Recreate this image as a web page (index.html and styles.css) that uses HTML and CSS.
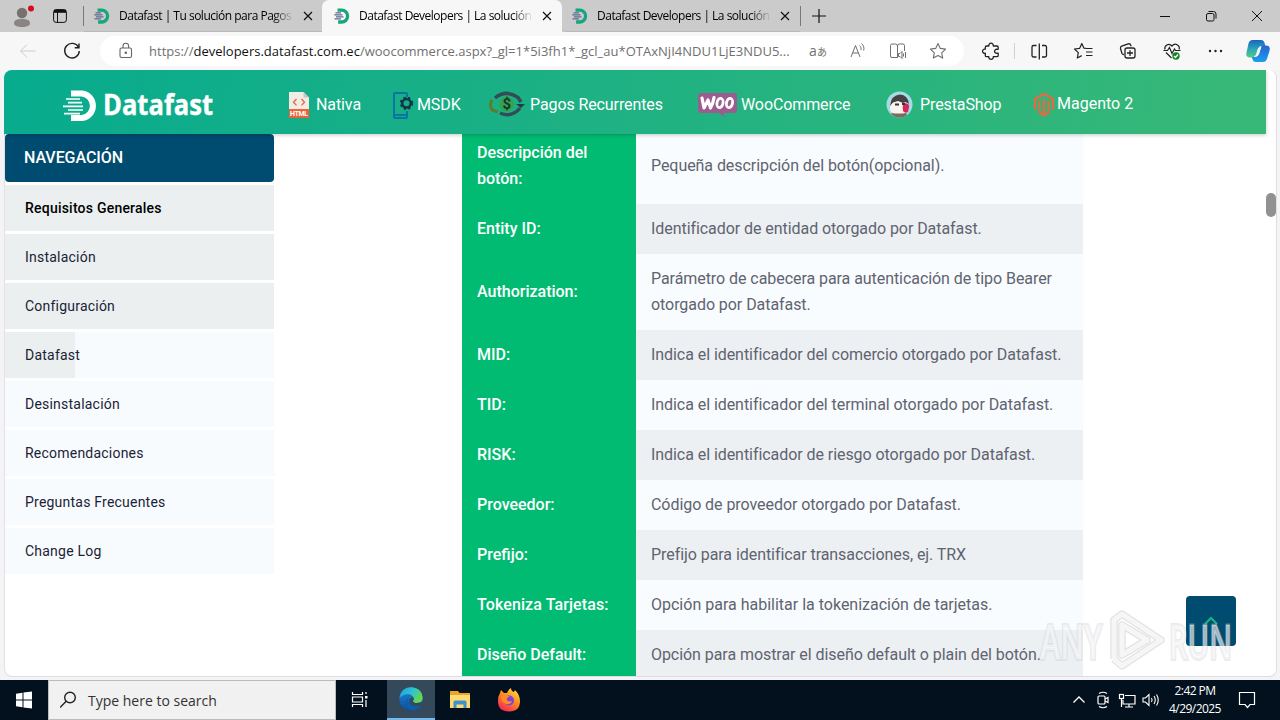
FILE: index.html
```html
<!DOCTYPE html>
<html lang="es">
<head>
<meta charset="utf-8">
<title>Datafast Developers</title>
<link rel="stylesheet" href="styles.css">
</head>
<body>
<svg width="0" height="0" class="defs">
  <defs>
    <linearGradient id="cp1" x1="0" y1="0" x2="0" y2="1"><stop offset="0" stop-color="#1a62c4"/><stop offset=".5" stop-color="#2aa5b8"/><stop offset="1" stop-color="#54cd83"/></linearGradient>
    <linearGradient id="cp2" x1="0" y1="0" x2="0" y2="1"><stop offset="0" stop-color="#2763cf"/><stop offset="1" stop-color="#1ba0ee"/></linearGradient>
    <linearGradient id="edge1" x1="0" y1="0" x2="1" y2=".5"><stop offset="0" stop-color="#1b9de2"/><stop offset=".55" stop-color="#2fc2cf"/><stop offset="1" stop-color="#66d64f"/></linearGradient>
    <linearGradient id="edge2" x1="0" y1="0" x2="0" y2="1"><stop offset="0" stop-color="#2187d5"/><stop offset="1" stop-color="#0a4f9f"/></linearGradient>
    <linearGradient id="fox" x1=".8" y1="0" x2=".2" y2="1"><stop offset="0" stop-color="#ffe03d"/><stop offset=".45" stop-color="#ff8a1f"/><stop offset="1" stop-color="#f4215c"/></linearGradient>
    <symbol id="favicon" viewBox="0 0 16 16">
      <path d="M4 2.200H8.200a5.900 5.900 0 0 1 0 11.800H4.600" fill="none" stroke="#16a57c" stroke-width="3.300"/>
      <path d="M2 4.800H7.500M0.800 6.800H9M2.500 8.800H10M1 10.800H7.500" stroke="#5d6a91" stroke-width="1.200"/>
    </symbol>
    <symbol id="x" viewBox="0 0 10 10"><path d="M1 1l8 8M9 1l-8 8" stroke="#111" stroke-width="1.2" fill="none"/></symbol>
  </defs>
</svg>

<div class="tabstrip">
  <svg class="avatar" width="24" height="24" viewBox="0 0 24 24"><circle cx="12" cy="9" r="5.200" fill="#777270"/><path d="M4 19.500c0-3.500 3-4.500 8-4.500s8 1 8 4.500c0 2-3.500 3.500-8 3.500s-8-1.500-8-3.500z" fill="#8a8583"/><circle cx="21" cy="4.500" r="3" fill="#d50b1d"/></svg>
  <svg class="spaces" width="14" height="14" viewBox="0 0 14 14" fill="none" stroke="#111"><rect x=".6" y=".6" width="12.800" height="12.800" rx="2.500"/><path d="M1 2.300h12" stroke-width="3"/><path d="M4.500 3v10"/></svg>
  <span class="tab-sep"></span>
  <div class="tab"><svg width="17" height="16"><use href="#favicon"/></svg><span class="tab-title">Datafast | Tu solución para Pagos</span><svg width="10" height="10"><use href="#x"/></svg></div>
  <div class="tab active"><svg width="17" height="16"><use href="#favicon"/></svg><span class="tab-title">Datafast Developers | La solución</span><svg width="10" height="10"><use href="#x"/></svg></div>
  <div class="tab last"><svg width="17" height="16"><use href="#favicon"/></svg><span class="tab-title">Datafast Developers | La solución</span><svg width="10" height="10"><use href="#x"/></svg></div>
  <span class="tab-sep"></span>
  <svg class="plus" width="14" height="14" viewBox="0 0 14 14"><path d="M7 0v14M0 7h14" stroke="#111" stroke-width="1.200"/></svg>
  <div class="win-buttons">
    <svg width="46" height="32" viewBox="0 0 46 32" fill="none" stroke="#111"><path d="M18 16.500h10"/></svg>
    <svg width="46" height="32" viewBox="0 0 46 32" fill="none" stroke="#111"><rect x="18.500" y="13.500" width="7.500" height="7.500" rx="1.500"/><path d="M20.500 11.500h5a2.500 2.500 0 0 1 2.500 2.500v4.500"/></svg>
    <svg width="46" height="32" viewBox="0 0 46 32" fill="none" stroke="#111"><path d="M18 11l10 10M28 11l-10 10"/></svg>
  </div>
</div>

<div class="toolbar">
  <svg class="slot" width="44" height="38" viewBox="0 0 44 38" fill="none" stroke="#ccc"><path d="M29.500 19H15M21 12.500l-6.500 6.500 6.500 6.500"/></svg>
  <svg class="slot" width="44" height="38" viewBox="0 0 44 38" fill="none" stroke="#222" stroke-width="1.400"><path d="M28.500 15.300a7.300 7.300 0 1 0 .8 3.700M29 11.500v4.300h-4.300"/></svg>
  <div class="address">
    <svg width="14" height="18" viewBox="0 0 14 18" fill="none" stroke="#666" stroke-width="1.100"><rect x="1" y="6" width="11.500" height="9.500" rx="1.500"/><path d="M4 6V4a2.800 2.800 0 0 1 5.600 0v2"/><circle cx="6.800" cy="10.700" r=".7" fill="#666"/></svg>
    <span class="url">https://<b>developers.datafast.com.ec</b>/woocommerce.aspx?_gl=1*5i3fh1*_gcl_au*OTAxNjI4NDU1LjE3NDU5...</span>
    <span class="translate">a<small>あ</small></span>
    <svg width="40" height="30" viewBox="0 0 40 30" fill="none" stroke="#707070"><path d="M13 21l4.500-11.500L22 21M14.600 17h6M21.500 9.500c1.500 1.300 1.800 3 1.500 4.500M23.500 7.500c2.300 2 2.800 4.500 2.200 7"/></svg>
    <svg width="40" height="30" viewBox="0 0 40 30" fill="none" stroke="#707070"><path d="M20 21.500h-6a1.500 1.500 0 0 1-1.500-1.500V9.500A1.500 1.500 0 0 1 14 8h3.500a2 2 0 0 1 2 2v11.500M19.500 10a2 2 0 0 1 2-2H25a1.500 1.500 0 0 1 1.500 1.500V15"/><path d="M20.500 17.500h1.500l2-2v7l-2-2h-1.500zM25.500 17.500v3M27.500 16v6"/></svg>
    <svg width="40" height="30" viewBox="0 0 40 30" fill="none" stroke="#707070" stroke-width="1.100" stroke-linejoin="round"><path d="M20 7.500l2.300 4.900 5.300.7-3.900 3.700 1 5.300-4.700-2.600-4.700 2.600 1-5.300-3.900-3.700 5.300-.7z"/></svg>
  </div>
  <svg class="ext" width="48" height="38" viewBox="0 0 48 38" fill="none" stroke="#222" stroke-width="1.300" stroke-linejoin="round"><path d="M20.500 14h2.300a2.300 2.300 0 1 1 4.500 0h3.700q1.200 0 1.200 1.200v2.100h-1.200a2 2 0 1 0 0 3.900h1.200v2.200q0 1.200-1.200 1.200h-3.700a2.300 2.300 0 1 1-4.500 0h-2.300q-1.200 0-1.200-1.200v-2.200a2.100 2.100 0 1 1 0-4v-2q0-1.200 1.200-1.200z"/></svg>
  <span class="tool-sep"></span>
  <svg width="44" height="38" viewBox="0 0 44 38" fill="none" stroke="#222" stroke-width="1.300"><path d="M19.500 13.500h-3a1.500 1.500 0 0 0-1.500 1.500v8.500a1.500 1.500 0 0 0 1.500 1.500h3M25 13.500h3a1.500 1.500 0 0 1 1.500 1.500v8.500a1.500 1.500 0 0 1-1.500 1.500h-3M22.300 11.500v16"/></svg>
  <svg width="44" height="38" viewBox="0 0 44 38" fill="none" stroke="#222" stroke-width="1.200" stroke-linejoin="round"><path d="M26 16.500l-3.200-.4-2-4.600-2.100 4.800-5.200.7 3.800 3.600-1 5.400 4.400-2.400M24 16.500h7.500M25 20h6.500M25 23.500h6.500"/></svg>
  <svg width="44" height="38" viewBox="0 0 44 38" fill="none" stroke="#222" stroke-width="1.300"><rect x="20" y="16" width="10" height="10" rx="2"/><path d="M25 18.200v5.800M22 21h6M19 22.500a2 2 0 0 1-2-1l-1.500-5a2 2 0 0 1 1.200-2.300l6.500-2.300a2 2 0 0 1 2.500 1.200l.5 1.200"/></svg>
  <svg width="44" height="38" viewBox="0 0 44 38" fill="none" stroke="#222" stroke-width="1.200"><path d="M16 17.500c-1-3.500 3.500-7.500 7-3.500 3.500-4 8.500 0 7 3.500M17 20.500l5.500 5.500M14.500 18.500h4l2-3 2.500 6 2.500-4.500 1 1.500h5"/><circle cx="27" cy="24" r="3.700" fill="#118325" stroke="none"/><path d="M25 24l1.500 1.500 2.500-3" stroke="#fff"/></svg>
  <svg width="44" height="38" viewBox="0 0 44 38" fill="#222"><circle cx="17" cy="19" r="1.200"/><circle cx="22.500" cy="19" r="1.200"/><circle cx="28" cy="19" r="1.200"/></svg>
  <svg class="copilot" width="40" height="38" viewBox="0 0 40 38"><path d="M15.500 8h8.500q3 0 3.700 3.500l.7 2.500h-3q-2.500 0-3.300 3l-1.800 5.500q-1 3-4 3h-3q-5 0-3.800-5l2-9q1-3.500 4-3.500z" fill="url(#cp1)"/><path d="M26 30h-7q-3 0-3.700-3.500l-.6-1.500h2.500q2.500 0 3.300-3l1.800-5.500q1-3 4-3h2.500q5 0 3.800 5l-2.500 8q-1 3.500-4.100 3.500z" fill="url(#cp2)"/><path d="M17.500 24.500q1.500-.5 2-2l1.700-5.500q.7-2 2.800-2.500l-2.500 8q-.7 2-4 2z" fill="#f0f8fc" stroke="#f0f8fc"/></svg>
</div>

<div class="viewport">
  <header class="site-header">
    <svg class="logo-mark" width="34" height="32" viewBox="0 0 34 32" fill="none" stroke="#fff"><path d="M8 3.500h11a12 12.300 0 0 1 0 24.500H8" stroke-width="6"/><path d="M3 9h14M5 12.700h14M0 16.300h20M5 20h15M1 23.700h16" stroke-width="1.700"/></svg>
    <svg class="logo-text" width="112" height="34" viewBox="0 0 112 34" fill="#fff" stroke="#fff" stroke-width=".4"><text x="0" y="27" textLength="110" lengthAdjust="spacingAndGlyphs">Datafast</text></svg>
    <nav class="site-nav">
      <a><svg width="28" height="28" viewBox="0 0 28 28"><path d="M1 1h14.500L21 6.500V19H1z" fill="#f1ece4"/><path d="M15.500 1v5.500H21z" fill="#c9c6bf"/><path d="M8.500 8l-3 3.200 3 3.200M13.500 8l3 3.200-3 3.200" stroke="#e56446" stroke-width="1.300" fill="none"/><rect x="1" y="18" width="20" height="9" fill="#ef6239"/><text x="2" y="25.300" font-size="7" font-weight="bold" fill="#fff" textLength="18" font-family="Roboto">HTML</text></svg><span>Nativa</span></a>
      <a><svg width="25" height="28" viewBox="0 0 25 28" fill="none"><path d="M15 6V3q0-1-1-1H3Q2 2 2 3v23q0 1 1 1h11q1 0 1-1v-6" stroke="#0875a5" stroke-width="2"/><path d="M2 24h13" stroke="#0875a5" stroke-width="2"/><circle cx="14.500" cy="12.300" r="4.300" stroke="#14344a" stroke-width="2.500"/><circle cx="14.500" cy="12.300" r="5.800" stroke="#14344a" stroke-width="1.800" stroke-dasharray="2.300 2.400"/></svg><span>MSDK</span></a>
      <a><svg width="41" height="28" viewBox="0 0 41 28" fill="none"><path d="M6 7Q17-2 29 6.500L32 11" stroke="#334c55" stroke-width="3.500"/><path d="M27 13h9l-4 4z" fill="#233b49"/><path d="M31 17q-8 10-20 5" stroke="#334c55" stroke-width="3.500"/><path d="M3 9q-3 5 0 10l6 2" stroke="#5b7d2c" stroke-width="3"/><circle cx="17.500" cy="13" r="7.500" fill="#34a24f"/><text x="13.400" y="18.300" font-family="Roboto" font-size="15" font-weight="bold" fill="#14372b">$</text></svg><span>Pagos Recurrentes</span></a>
      <a><svg width="44" height="28" viewBox="0 0 44 28"><path d="M4 2h33q3 0 3 3v14q0 3-3 3H26.500l1 4-6-4H4q-3 0-3-3V5q0-3 3-3z" fill="#9c5c8f"/><path d="M5 7l2 10 4-8 2.500 8Q16 13 17 6.500" fill="none" stroke="#fff" stroke-width="3.200" stroke-linejoin="round" stroke-linecap="round"/><ellipse cx="23" cy="12" rx="3" ry="4.700" fill="none" stroke="#fff" stroke-width="2.800" transform="rotate(12 23 12)"/><ellipse cx="32.500" cy="12" rx="3" ry="4.700" fill="none" stroke="#fff" stroke-width="2.800" transform="rotate(12 32.500 12)"/></svg><span>WooCommerce</span></a>
      <a><svg width="34" height="28" viewBox="0 0 34 28"><circle cx="13.500" cy="13.500" r="13" fill="#a4dbe4"/><path d="M4 18Q4 6 12 4q10 0 10 9l-2 9q-8 4-15-1z" fill="#f7f4ef"/><path d="M4 15Q5 4 14 3.500q8 .5 9 9.500-3-3-6-1l-5-2-5 1.500z" fill="#454043"/><path d="M17.500 12.500q6-1 5.500 3.500l-1 5q-3 2-5-1-1-4 .5-7.500z" fill="#d7265b"/><path d="M9 13.500h4M16 13l3 0" stroke="#333" stroke-width="1.800"/><path d="M5 22q8 1 15 0l1 2q-7 5-15 0z" fill="#7d6a5a"/></svg><span>PrestaShop</span></a>
      <a class="magento"><svg width="24" height="28" viewBox="0 0 24 28" fill="none" stroke="#de6d43" stroke-width="2.500"><path d="M2 18.500V8l9-5 9 5v10.500"/><path d="M6.500 9.500v12l4.500 2.800 4.500-2.800v-12M11 8v15" stroke-width="2.300"/></svg><span>Magento 2</span></a>
    </nav>
  </header>
  <div class="page">
    <aside class="sidebar">
      <h2>NAVEGACIÓN</h2>
      <ul>
        <li class="done current">Requisitos Generales</li>
        <li class="done">Instalación</li>
        <li class="done">Configuración</li>
        <li class="partial">Datafast</li>
        <li>Desinstalación</li>
        <li>Recomendaciones</li>
        <li>Preguntas Frecuentes</li>
        <li>Change Log</li>
      </ul>
    </aside>
    <div class="params">
      <div class="row tall"><b>Descripción del<br>botón:</b><span>Pequeña descripción del botón(opcional).</span></div>
      <div class="row"><b>Entity ID:</b><span>Identificador de entidad otorgado por Datafast.</span></div>
      <div class="row two"><b>Authorization:</b><span>Parámetro de cabecera para autenticación de tipo Bearer<br>otorgado por Datafast.</span></div>
      <div class="row"><b>MID:</b><span>Indica el identificador del comercio otorgado por Datafast.</span></div>
      <div class="row"><b>TID:</b><span>Indica el identificador del terminal otorgado por Datafast.</span></div>
      <div class="row"><b>RISK:</b><span>Indica el identificador de riesgo otorgado por Datafast.</span></div>
      <div class="row"><b>Proveedor:</b><span>Código de proveedor otorgado por Datafast.</span></div>
      <div class="row"><b>Prefijo:</b><span>Prefijo para identificar transacciones, ej. TRX</span></div>
      <div class="row"><b class="wide">Tokeniza Tarjetas:</b><span class="wide">Opción para habilitar la tokenización de tarjetas.</span></div>
      <div class="row"><b>Diseño Default:</b><span>Opción para mostrar el diseño default o plain del botón.</span></div>
    </div>
  </div>
  <div class="scrollbar"></div>
  <div class="to-top"><svg width="16" height="10" viewBox="0 0 16 10"><path d="M2 8l6-6 6 6" fill="none" stroke="#14b487" stroke-width="2.200"/></svg></div>
</div>

<svg class="watermark" width="210" height="76" viewBox="0 0 210 76">
  <g class="wm-shade"><text x="6" y="57" textLength="62" lengthAdjust="spacingAndGlyphs">ANY</text><text x="135" y="57" textLength="63" lengthAdjust="spacingAndGlyphs">RUN</text></g>
  <g class="wm-text"><text x="6" y="57" textLength="62" lengthAdjust="spacingAndGlyphs">ANY</text><text x="135" y="57" textLength="63" lengthAdjust="spacingAndGlyphs">RUN</text></g>
  <g fill="none" stroke-linejoin="round"><path d="M80 57V18L88 12l39 26-39 26-8-7M88 23v30l25-15z" stroke="#c4c6ca" stroke-width="7.500" opacity=".5"/><path d="M80 57V18L88 12l39 26-39 26-8-7M88 23v30l25-15z" stroke="#f6f6f7" stroke-width="5"/></g>
</svg>

<footer class="taskbar">
  <svg class="start" width="48" height="40" viewBox="0 0 48 40" fill="#fff"><path d="M16 13.800l6.500-1v6.700H16zM23.500 12.600l8.500-1.200v8.100h-8.500zM16 20.500h6.500v6.700l-6.500-1zM23.500 20.500H32v8.100l-8.500-1.200z"/></svg>
  <div class="search"><svg width="18" height="18" viewBox="0 0 18 18" fill="none" stroke="#222" stroke-width="1.400"><circle cx="10" cy="6.500" r="5.300"/><path d="M6.200 10.300L0 16.500"/></svg><span>Type here to search</span></div>
  <svg class="task" width="50" height="40" viewBox="0 0 50 40" fill="none" stroke="#fff" stroke-width="1.200"><path d="M16.500 12v2.500h10V12M16.500 27v-2.500h10V27M16.500 17h10v5h-10zM30 12v2M30 20v7"/><rect x="29" y="16" width="2.500" height="2.500" fill="#fff" stroke="none"/></svg>
  <div class="app open"><svg width="24" height="24" viewBox="0 0 24 24"><circle cx="12" cy="12" r="11.700" fill="url(#edge2)"/><path d="M.5 11Q2 0 12.500.3 23 1 23.700 10.500q0 5.500-6 5.500-4 0-3.700-2 1.500-2 0-4.500Q11 6 6 7.500 2 8.500.5 11z" fill="url(#edge1)"/><path d="M9.500 10q-2.500 4 1 7.500 4.500 4 11 1l.8.700Q17 25 10 22q-7-5-.5-12z" fill="#125da9"/><path d="M14 10q1.500 2 0 4 0 2 4 2l6-1v2.500q-3 2-7 1.500-8 0-6.500-7z" fill="#34495a"/></svg></div>
  <div class="app"><svg width="22" height="20" viewBox="0 0 22 20"><path d="M1 1h8l1.500 2H21v15H1z" fill="#e8a42b"/><path d="M1 5h20v13H1z" fill="#ffda72"/><path d="M4.500 18v-6q0-1.500 1.500-1.500h10q1.500 0 1.500 1.500v6h-3v-3.500h-7V18z" fill="#3d94ca"/></svg></div>
  <div class="app"><svg width="24" height="24" viewBox="0 0 24 24"><path d="M3 5l1-3 3 3h3q1-3 4-5 0 3 3 4l1-2q5 5 5 11 0 10.500-11 10.500T1 13Q1 8 3 5z" fill="url(#fox)"/><circle cx="12" cy="12.500" r="5" fill="#7c42df"/><path d="M4 8q5-2 9 1-4 0-3 3 1 2 5 1-1 4-6 3-5-2-5-8z" fill="#ff8b25"/></svg></div>
  <div class="tray">
    <svg width="24" height="40" viewBox="0 0 24 40" fill="none" stroke="#fff" stroke-width="1.300"><path d="M6.500 22.500l5.500-5.500 5.500 5.500"/></svg>
    <svg width="24" height="40" viewBox="0 0 24 40" fill="none" stroke="#fff" stroke-width="1.200"><rect x="7" y="16" width="7" height="8" rx="1"/><path d="M14 19l3-1.500v5L14 21M8 13.500q4-2.500 8 0M8 26.500q4 2.500 8 0"/></svg>
    <svg width="24" height="40" viewBox="0 0 24 40" fill="none" stroke="#fff" stroke-width="1.200"><path d="M10 15.500h10v8.500H8v-4M14 24v3M10 27h8"/><rect x="4.500" y="14.500" width="4" height="4"/><path d="M6.500 18.500v8.500"/></svg>
    <svg width="24" height="40" viewBox="0 0 24 40" fill="none" stroke="#fff" stroke-width="1.100"><path d="M4 18h2.500l3.500-3.500v11L6.500 22H4zM12.500 18q1.200 2 0 4M15 16q2.500 4 0 8M17.500 14.500q3.500 5.500 0 11"/></svg>
    <div class="clock"><span class="time">2:42 PM</span><span>4/29/2025</span></div>
    <svg width="48" height="40" viewBox="0 0 48 40" fill="none" stroke="#fff" stroke-width="1.200"><path d="M16.500 12.500h15v12H27l-2.500 3-2.500-3h-5.500z"/></svg>
    <span class="peek"></span>
  </div>
</footer>
</body>
</html>
```
FILE: styles.css
```css
* { box-sizing: border-box; }
body { margin: 0; width: 1280px; height: 720px; overflow: hidden; background: #f4f4f6; font-family: "Open Sans", "Noto Sans CJK JP", sans-serif; }
svg { display: block; flex: none; }
.defs { position: absolute; }

.tabstrip { display: flex; align-items: center; height: 32px; background: #cbcbcb; }
.avatar { margin-left: 10px; }
.spaces { margin-left: 19px; }
.tab-sep { width: 1px; height: 20px; background: #777; }
.spaces + .tab-sep { margin-left: 16px; }
.tab { display: flex; align-items: center; width: 238px; height: 32px; padding: 0 9px 0 9px; border-bottom: 1px solid #b8b8b8; }
.tab.active { width: 240px; background: #f7f7f7; border: 0; border-radius: 7px 7px 0 0; padding: 0 10px 0 11px; }
.tab.last { border-radius: 0 0 0 5px; padding-right: 10px; }
.tab-title { flex: 1; margin: 0 9px 0 9px; overflow: hidden; white-space: nowrap; font-size: 12px; line-height: 20px; letter-spacing: -.5px; color: #000; mask-image: linear-gradient(90deg, #000 88%, transparent); }
.plus { margin-left: 11px; }
.win-buttons { display: flex; margin-left: auto; }

.toolbar { display: flex; align-items: center; height: 38px; padding-left: 6px; background: #f7f7f7; }
.address { display: flex; align-items: center; width: 864px; height: 30px; margin-left: 6px; padding: 0 6px 0 19px; border-radius: 15px; background: #fff; }
.url { width: 645px; margin-left: 16px; white-space: nowrap; font-size: 13px; line-height: 20px; letter-spacing: .01px; color: #707070; }
.url b { font-weight: 400; color: #111; }
.translate { width: 40px; margin-left: auto; text-align: center; font-size: 14px; line-height: 20px; color: #707070; white-space: nowrap; }
.translate small { font-size: 10px; }
.ext { margin-left: 2px; }
.tool-sep { width: 1px; height: 16px; margin-right: 2px; background: #d0d0d0; }

.viewport { position: relative; width: 1273px; height: 607px; margin-left: 4px; overflow: hidden; border: solid #dedee2; border-width: 0 1px 1px 0; border-radius: 8px; background: #fff; font-family: Roboto, sans-serif; box-shadow: inset 1px 0 #e2e2e5; }
.site-header { position: relative; z-index: 1; display: flex; align-items: center; width: 1262px; height: 64px; padding-left: 59px; background: linear-gradient(100deg, #07ab8e, #38b877); box-shadow: 0 1px 4px rgba(0,0,0,.22); color: #fff; }
.logo-mark { margin-top: 7px; }
.logo-text { margin: 6px 0 0 6px; font: 700 28px "Open Sans", sans-serif; overflow: visible; }
.site-nav { display: grid; grid-template-columns: 104px 97px 208px 189px 147px 110px; margin-left: 73px; }
.site-nav a { display: flex; align-items: center; height: 28px; margin-top: 5px; font-size: 16px; line-height: 24px; letter-spacing: -.1px; white-space: nowrap; }
.site-nav .magento span { margin-top: -2px; letter-spacing: 0; }

.page { display: flex; }
.sidebar { width: 269px; margin-left: 1px; }
.sidebar h2 { height: 48px; margin: 0; padding-left: 19px; border-radius: 4px; background: #004b70; color: #fff; font-size: 16px; font-weight: 500; line-height: 47px; letter-spacing: -.05px; }
.sidebar ul { display: grid; gap: 3px; margin: 3px 0 0; padding: 0; list-style: none; }
.sidebar li { height: 46px; padding-left: 20px; background: #f8fbfe; color: #1a2336; font-size: 14px; line-height: 46px; letter-spacing: .22px; }
.sidebar li.done { background: #ebeff0; }
.sidebar li.current { color: #000; font-weight: 500; }
.sidebar li.partial { background: linear-gradient(90deg, #ebeff0 70px, #f8fbfe 70px); }

.params { width: 621px; margin: -7px 0 0 188px; font-size: 16px; line-height: 26px; color: #606370; }
.row { display: grid; grid-template-columns: 174px 447px; height: 50px; }
.row.tall { height: 77px; }
.row.two { height: 76px; }
.row b { display: flex; align-items: center; padding-left: 15px; background: #02bb72; color: #fff; font-weight: 500; white-space: nowrap; }
.row span { display: flex; align-items: center; padding-left: 15px; background: #f9fcfe; letter-spacing: -.06px; white-space: nowrap; }
.row:nth-child(even) span { background: #edf0f3; }
.row b.wide { letter-spacing: .1px; }
.row span.wide { letter-spacing: 0; }

.scrollbar { position: absolute; right: 0; top: 123px; width: 10px; height: 24px; border-radius: 5px; background: #919191; }
.to-top { position: absolute; left: 1182px; top: 526px; display: grid; place-items: center; width: 50px; height: 50px; border-radius: 4px; background: #004b70; }
.watermark { position: absolute; left: 1034px; top: 602px; overflow: visible; }
.wm-shade, .wm-text { font: 600 47px "Open Sans", sans-serif; }
.wm-shade { fill: none; stroke: rgba(175,178,185,.3); stroke-width: 3.5px; }
.wm-text { fill: rgba(250,250,251,.6); stroke: rgba(250,250,251,.5); stroke-width: 1px; }

.taskbar { display: flex; height: 40px; margin-top: 3px; background: #02111d; color: #fff; }
.search { display: flex; align-items: center; width: 288px; padding-left: 11px; border: 1px solid #bcbcbc; background: #f1f1f1; color: #333; font-size: 14px; }
.search span { margin-left: 10px; white-space: nowrap; }
.app { display: grid; place-items: center; width: 49px; height: 40px; }
.app.open { width: 48px; margin-left: 1px; background: #34495a; border-bottom: 2px solid #76b9ed; }
.tray { display: flex; margin-left: auto; }
.clock { display: flex; flex-direction: column; align-items: center; width: 60px; margin-right: -2px; margin-left: 2px; padding-top: 2px; font-size: 12px; line-height: 18px; letter-spacing: -.55px; white-space: nowrap; }
.peek { width: 9px; }
```
